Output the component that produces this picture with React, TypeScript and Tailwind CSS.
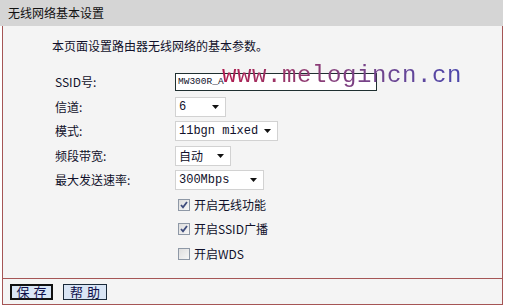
import { ReactNode } from "react";

function Arrow() {
  return (
    <svg width="7" height="4" viewBox="0 0 7 4" className="shrink-0">
      <path d="M0 0h7L3.5 4z" fill="#111" />
    </svg>
  );
}

function FakeSelect({ value, width, mono = true }: { value: string; width: string; mono?: boolean }) {
  return (
    <div
      className={`h-[20px] ${width} bg-white border border-[#d2d2d2] flex items-center justify-between pl-[3px] pr-[6px]`}
    >
      <span className={mono ? "font-['Liberation_Mono',monospace] text-[12px]" : "text-[12px]"}>{value}</span>
      <Arrow />
    </div>
  );
}

function Row({ label, children }: { label?: string; children: ReactNode }) {
  return (
    <div className="h-[24.5px] flex items-center">
      <div className="w-[172px] pl-[52px] shrink-0 whitespace-nowrap">{label}</div>
      {children}
    </div>
  );
}

function Check({ checked, label }: { checked: boolean; label: string }) {
  return (
    <div className="flex items-center pl-[3px] gap-[4px]">
      <svg width="12" height="12" viewBox="0 0 12 12">
        <defs>
          <linearGradient id="cbg" x1="0" y1="0" x2="1" y2="1">
            <stop offset="0" stopColor="#dcdcdc" />
            <stop offset="1" stopColor="#f8f8f8" />
          </linearGradient>
        </defs>
        <rect x="0.5" y="0.5" width="11" height="11" fill="url(#cbg)" stroke="#8e98a6" />
        {checked && <path d="M3 6l2 2.3L9 3" fill="none" stroke="#3e4c7c" strokeWidth="1.8" />}
      </svg>
      <span className="whitespace-nowrap">{label}</span>
    </div>
  );
}

export default function App() {
  return (
    <div className="relative w-[505px] h-[306px] bg-white overflow-hidden font-['Noto_Sans_CJK_SC',sans-serif] text-[12px] leading-[16px] text-[#10102a]">
      {/* title bar */}
      <div className="w-[503px] h-[26px] bg-[#d5d5d5] flex items-center pl-[8px] text-[#111]">
        无线网络基本设置
      </div>

      <div className="ml-[2px] w-[501px] border-l border-r border-[#a55555] bg-[#f4f4f4]">
        {/* form */}
        <div className="h-[253px] border-b border-[#a55555] pt-[12px]">
          <p className="pl-[49px] h-[16px]">本页面设置路由器无线网络的基本参数。</p>
          <div className="mt-[16px]">
            <Row label="SSID号:">
              <div className="h-[18px] w-[202px] bg-white border border-[#1f2f30] flex items-center pl-[2px] font-['Liberation_Mono',monospace] text-[9.5px]">
                MW300R_A
              </div>
            </Row>
            <Row label="信道:">
              <FakeSelect value="6" width="w-[51px]" />
            </Row>
            <Row label="模式:">
              <FakeSelect value="11bgn mixed" width="w-[103px]" />
            </Row>
            <Row label="频段带宽:">
              <FakeSelect value="自动" width="w-[56px]" mono={false} />
            </Row>
            <Row label="最大发送速率:">
              <FakeSelect value="300Mbps" width="w-[89px]" />
            </Row>
            <Row>
              <Check checked label="开启无线功能" />
            </Row>
            <Row>
              <Check checked label="开启SSID广播" />
            </Row>
            <Row>
              <Check checked={false} label="开启WDS" />
            </Row>
          </div>
        </div>

        {/* buttons */}
        <div className="h-[26px] border-b border-[#a55555] flex items-center pl-[7px] gap-[10px]">
          <button className="h-[16px] w-[43px] border-2 border-[#111] bg-[#d9e5f5] flex items-center justify-center tracking-[4px] pl-[4px] text-[13px] text-[#10104a]">
            保存
          </button>
          <button className="h-[16px] w-[44px] border border-[#1a2a3a] bg-[#d9e5f5] flex items-center justify-center tracking-[4px] pl-[4px] text-[13px] text-[#10104a]">
            帮助
          </button>
        </div>
      </div>

      {/* watermark */}
      <div className="absolute left-[222px] top-[64px] pointer-events-none font-['Liberation_Mono',monospace] text-[24px] leading-[24px] tracking-[0.6px] bg-gradient-to-r from-[#b0184e] to-[#4a46ac] bg-clip-text text-transparent">
        www.melogincn.cn
      </div>
    </div>
  );
}
